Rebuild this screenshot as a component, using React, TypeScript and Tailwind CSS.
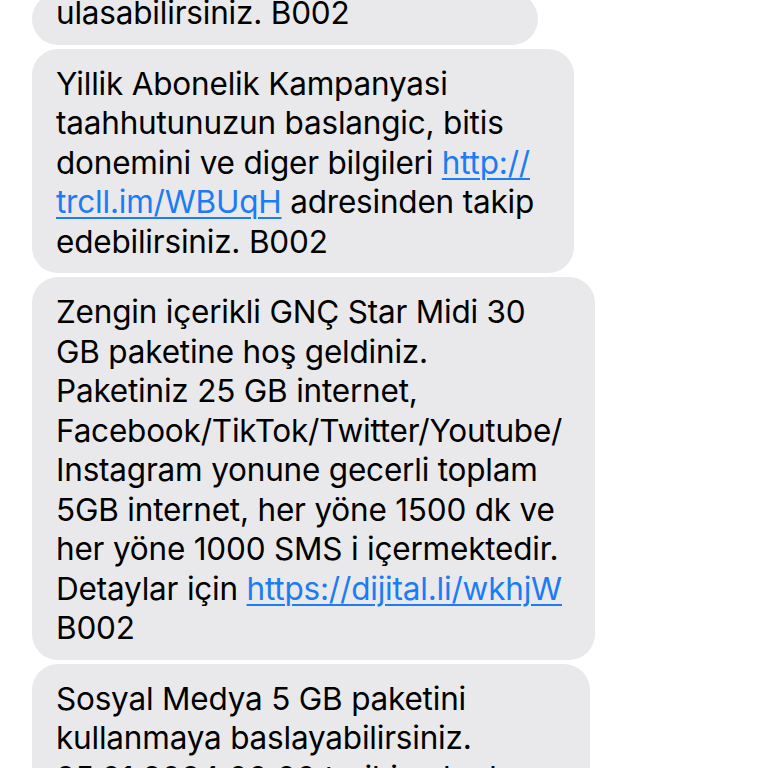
import React from 'react'

type Part = string | { link: string }

type Bubble = {
  width: string
  lines: Part[][]
}

const bubbles: Bubble[] = [
  { width: 'w-[506px]', lines: [['ulasabilirsiniz. B002']] },
  {
    width: 'w-[542px]',
    lines: [
      ['Yillik Abonelik Kampanyasi'],
      ['taahhutunuzun baslangic, bitis'],
      ['donemini ve diger bilgileri ', { link: 'http://' }],
      [{ link: 'trcll.im/WBUqH' }, ' adresinden takip'],
      ['edebilirsiniz. B002'],
    ],
  },
  {
    width: 'w-[563px]',
    lines: [
      ['Zengin içerikli GNÇ Star Midi 30'],
      ['GB paketine hoş geldiniz.'],
      ['Paketiniz 25 GB internet,'],
      ['Facebook/TikTok/Twitter/Youtube/'],
      ['Instagram yonune gecerli toplam'],
      ['5GB internet, her yöne 1500 dk ve'],
      ['her yöne 1000 SMS i içermektedir.'],
      ['Detaylar için ', { link: 'https://dijital.li/wkhjW' }],
      ['B002'],
    ],
  },
  {
    width: 'w-[558px]',
    lines: [
      ['Sosyal Medya 5 GB paketini'],
      ['kullanmaya baslayabilirsiniz.'],
      ['25.01.2024 00:00 tarihine kadar'],
      ['kullanabilirsiniz. B002'],
    ],
  },
]

export default function App() {
  return (
    <div className="h-[768px] w-[768px] overflow-hidden bg-white font-['Inter','Liberation_Sans',sans-serif] text-[31.5px] leading-[39.5px] text-black">
      <div className="-mt-[7px] flex flex-col gap-[4px] pl-[32px]">
        {bubbles.map((b, i) => (
          <div
            key={i}
            className={`${b.width} rounded-[26px] bg-[#e9e9eb] pb-[12px] pl-[24px] pr-2 ${i === 0 ? 'pt-0' : 'pt-[15px]'}`}
          >
            {b.lines.map((line, j) => (
              <div key={j} className="whitespace-nowrap tracking-[-0.2px]">
                {line.map((p, k) =>
                  typeof p === 'string' ? (
                    <span key={k}>{p}</span>
                  ) : (
                    <span key={k} className="text-[#1b7cf4] underline decoration-[1.5px] underline-offset-[4px]">
                      {p.link}
                    </span>
                  )
                )}
              </div>
            ))}
          </div>
        ))}
      </div>
    </div>
  )
}
